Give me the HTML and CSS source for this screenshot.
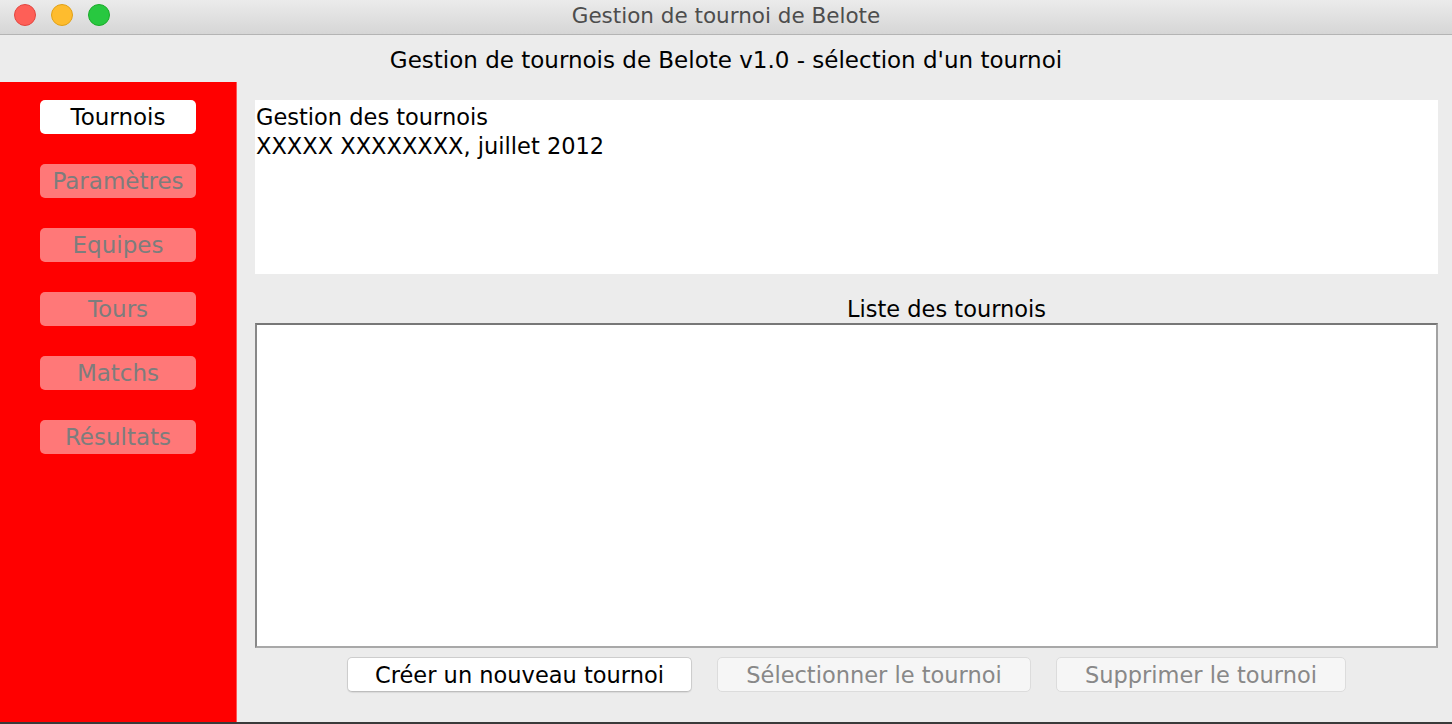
FILE: index.html
```html
<!DOCTYPE html>
<html lang="fr">
<head>
<meta charset="utf-8">
<title>Gestion de tournoi de Belote</title>
<link rel="stylesheet" href="styles.css">
</head>
<body>
<div class="window">
  <div class="titlebar">
    <div class="lights">
      <span class="light red"></span>
      <span class="light yellow"></span>
      <span class="light green"></span>
    </div>
    <div class="title">Gestion de tournoi de Belote</div>
  </div>
  <div class="header">Gestion de tournois de Belote v1.0 - sélection d'un tournoi</div>
  <div class="main">
    <nav class="sidebar">
      <button class="side-btn active">Tournois</button>
      <button class="side-btn disabled">Paramètres</button>
      <button class="side-btn disabled">Equipes</button>
      <button class="side-btn disabled">Tours</button>
      <button class="side-btn disabled">Matchs</button>
      <button class="side-btn disabled">Résultats</button>
    </nav>
    <section class="content">
      <div class="info">
        <div>Gestion des tournois</div>
        <div>XXXXX XXXXXXXX, juillet 2012</div>
      </div>
      <div class="list-title">Liste des tournois</div>
      <div class="list"></div>
      <div class="actions">
        <button class="btn btn-create">Créer un nouveau tournoi</button>
        <button class="btn btn-select disabled">Sélectionner le tournoi</button>
        <button class="btn btn-delete disabled">Supprimer le tournoi</button>
      </div>
    </section>
  </div>
  <div class="bottom-edge"></div>
</div>
</body>
</html>
```

FILE: styles.css
```css
* { box-sizing: border-box; }
html, body {
  margin: 0;
  padding: 0;
  width: 1452px;
  height: 724px;
  overflow: hidden;
  background: #ececec;
  font-family: "DejaVu Sans", "Noto Sans", sans-serif;
}
.window {
  width: 1452px;
  height: 724px;
  display: flex;
  flex-direction: column;
  background: #ececec;
}
.titlebar {
  height: 35px;
  flex: 0 0 35px;
  position: relative;
  background: linear-gradient(#ebebeb, #d6d6d6);
  border-bottom: 1px solid #b4b4b4;
  display: flex;
  align-items: center;
  justify-content: center;
}
.lights {
  position: absolute;
  left: 14px;
  top: 4px;
  display: flex;
  gap: 15px;
}
.light {
  width: 22px;
  height: 22px;
  border-radius: 50%;
  display: block;
}
.light.red { background: #fe5f57; border: 1px solid #e2463f; }
.light.yellow { background: #febc2e; border: 1px solid #e1a116; }
.light.green { background: #28c840; border: 1px solid #1aab29; }
.title {
  font-size: 21.5px;
  color: #4d4d4d;
  padding-bottom: 3px;
}
.header {
  height: 47px;
  flex: 0 0 47px;
  display: flex;
  align-items: center;
  justify-content: center;
  font-size: 23px;
  color: #000;
  padding-top: 2px;
}
.main {
  flex: 1;
  display: flex;
  min-height: 0;
}
.sidebar {
  width: 237px;
  flex: 0 0 237px;
  background: #ff0000;
  border-right: 1px solid #ff5555;
  display: flex;
  flex-direction: column;
  align-items: flex-start;
  padding: 18px 0 0 40px;
  gap: 30px;
}
.side-btn {
  width: 156px;
  height: 34px;
  border: none;
  border-radius: 5px;
  font-family: inherit;
  font-size: 23px;
  padding: 0 0 1px 0;
  line-height: 34px;
}
.side-btn.active {
  background: #fff;
  color: #000;
}
.side-btn.disabled {
  background: rgba(255, 255, 255, 0.47);
  color: #7d7d7d;
}
.content {
  flex: 1;
  display: flex;
  flex-direction: column;
  padding: 18px 14px 0 18px;
}
.info {
  height: 174px;
  background: #fff;
  font-size: 22.5px;
  line-height: 29px;
  padding: 3px 0 0 1px;
  color: #000;
}
.list-title {
  height: 49px;
  display: flex;
  align-items: center;
  justify-content: center;
  padding: 20px 0 0 200px;
  font-size: 22.5px;
  color: #000;
}
.list {
  height: 325px;
  background: #fff;
  border: 2px solid #9a9a9a;
  border-top-color: #777;
  border-left-color: #888;
  border-right-color: #a2a2a2;
  border-bottom-color: #a8a8a8;
}
.actions {
  display: flex;
  justify-content: center;
  gap: 25px;
  margin-top: 9px;
}
.btn {
  height: 35px;
  border: 1px solid #cdcdcd;
  border-bottom-color: #bdbdbd;
  border-radius: 5px;
  background: #fff;
  font-family: inherit;
  font-size: 22.5px;
  color: #000;
  padding: 0;
  box-shadow: 0 1px 1px rgba(0,0,0,0.08);
}
.btn-create { width: 345px; }
.btn-select { width: 314px; }
.btn-delete { width: 290px; }
.btn.disabled {
  background: #f6f6f6;
  color: #888;
  border-color: #dcdcdc;
  box-shadow: none;
}
.bottom-edge {
  height: 2px;
  flex: 0 0 2px;
  background: #3a3a3a;
}
```
